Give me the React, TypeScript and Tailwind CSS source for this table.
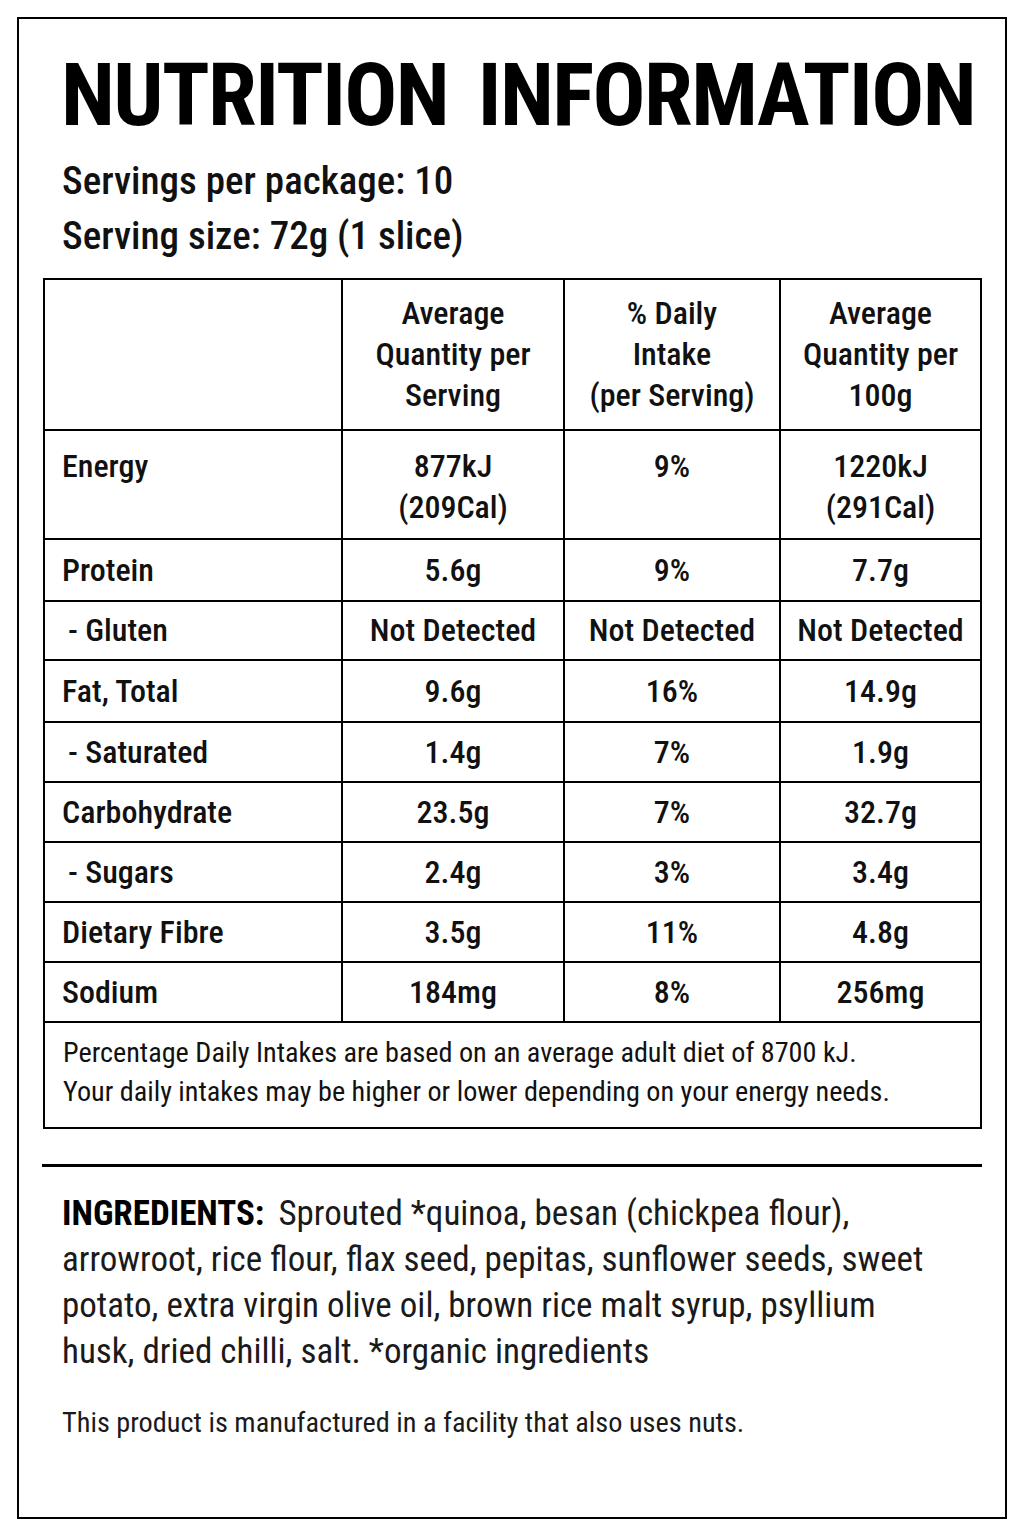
import React from "react";

type Row = {
  label: string;
  sub?: boolean;
  a: React.ReactNode;
  b: string;
  c: React.ReactNode;
  h: string;
  top?: boolean;
};

const rows: Row[] = [
  {
    label: "Energy",
    a: (
      <>
        877kJ
        <br />
        (209Cal)
      </>
    ),
    b: "9%",
    c: (
      <>
        1220kJ
        <br />
        (291Cal)
      </>
    ),
    h: "h-[109px]",
    top: true,
  },
  { label: "Protein", a: "5.6g", b: "9%", c: "7.7g", h: "h-[62px]" },
  { label: "- Gluten", sub: true, a: "Not Detected", b: "Not Detected", c: "Not Detected", h: "h-[59px]" },
  { label: "Fat, Total", a: "9.6g", b: "16%", c: "14.9g", h: "h-[62px]" },
  { label: "- Saturated", sub: true, a: "1.4g", b: "7%", c: "1.9g", h: "h-[60px]" },
  { label: "Carbohydrate", a: "23.5g", b: "7%", c: "32.7g", h: "h-[60px]" },
  { label: "- Sugars", sub: true, a: "2.4g", b: "3%", c: "3.4g", h: "h-[60px]" },
  { label: "Dietary Fibre", a: "3.5g", b: "11%", c: "4.8g", h: "h-[60px]" },
  { label: "Sodium", a: "184mg", b: "8%", c: "256mg", h: "h-[60px]" },
];

function DataRow({ r }: { r: Row }) {
  const align = r.top ? "items-start pt-[15px]" : "items-center";
  return (
    <div className={`flex border-b-2 border-black ${r.h}`}>
      <div className={`flex w-[298px] border-r-2 border-black pl-[17px] ${align}`}>
        <span className={r.sub ? "pl-[6px]" : ""}>{r.label}</span>
      </div>
      <div className={`flex w-[222px] justify-center border-r-2 border-black text-center ${align}`}>
        <span>{r.a}</span>
      </div>
      <div className={`flex w-[216px] justify-center border-r-2 border-black text-center ${align}`}>
        <span>{r.b}</span>
      </div>
      <div className={`flex flex-1 justify-center text-center ${align}`}>
        <span>{r.c}</span>
      </div>
    </div>
  );
}

export default function App() {
  return (
    <div className="h-[1536px] w-[1024px] bg-white pl-[17px] pt-[17px] font-['Roboto_Condensed',sans-serif] text-[#111]">
      <div className="h-[1502px] w-[990px] border-2 border-black bg-white">
        <h1 className="whitespace-nowrap pl-[42px] pt-[32px] text-[88px] font-bold leading-[88px] tracking-[-1.6px] text-black [word-spacing:11px]">
          NUTRITION INFORMATION
        </h1>
        <div className="mt-[15px] whitespace-nowrap pl-[43px] text-[39px] font-medium leading-[55px]">
          <div>Servings per package: 10</div>
          <div>Serving size: 72g (1 slice)</div>
        </div>

        <div className="ml-[24px] mt-[14px] w-[939px] border-2 border-black text-[32px] font-medium leading-[41px]">
          <div className="flex h-[151px] border-b-2 border-black">
            <div className="w-[298px] border-r-2 border-black" />
            <div className="flex w-[222px] items-center justify-center border-r-2 border-black text-center">
              <span>
                Average
                <br />
                Quantity per
                <br />
                Serving
              </span>
            </div>
            <div className="flex w-[216px] items-center justify-center border-r-2 border-black text-center">
              <span>
                % Daily
                <br />
                Intake
                <br />
                (per Serving)
              </span>
            </div>
            <div className="flex flex-1 items-center justify-center text-center">
              <span>
                Average
                <br />
                Quantity per
                <br />
                100g
              </span>
            </div>
          </div>
          {rows.map((r) => (
            <DataRow key={r.label} r={r} />
          ))}
          <div className="h-[104px] whitespace-nowrap pl-[18px] pt-[10px] text-[28.2px] font-normal leading-[39px]">
            <div>Percentage Daily Intakes are based on an average adult diet of 8700 kJ.</div>
            <div>Your daily intakes may be higher or lower depending on your energy needs.</div>
          </div>
        </div>

        <div className="ml-[23px] mt-[35px] h-[3px] w-[940px] bg-black" />

        <p className="mt-[24px] whitespace-nowrap pl-[43px] text-[35px] font-normal leading-[46px] text-[#1a1a1a]">
          <span className="font-bold text-black">INGREDIENTS:</span>
          <span className="ml-[14px]">Sprouted *quinoa, besan (chickpea flour),</span>
          <br />
          arrowroot, rice flour, flax seed, pepitas, sunflower seeds, sweet
          <br />
          potato, extra virgin olive oil, brown rice malt syrup, psyllium
          <br />
          husk, dried chilli, salt. *organic ingredients
        </p>

        <p className="mt-[30px] whitespace-nowrap pl-[43px] text-[28.3px] font-normal leading-[36px] text-[#1a1a1a]">
          This product is manufactured in a facility that also uses nuts.
        </p>
      </div>
    </div>
  );
}
